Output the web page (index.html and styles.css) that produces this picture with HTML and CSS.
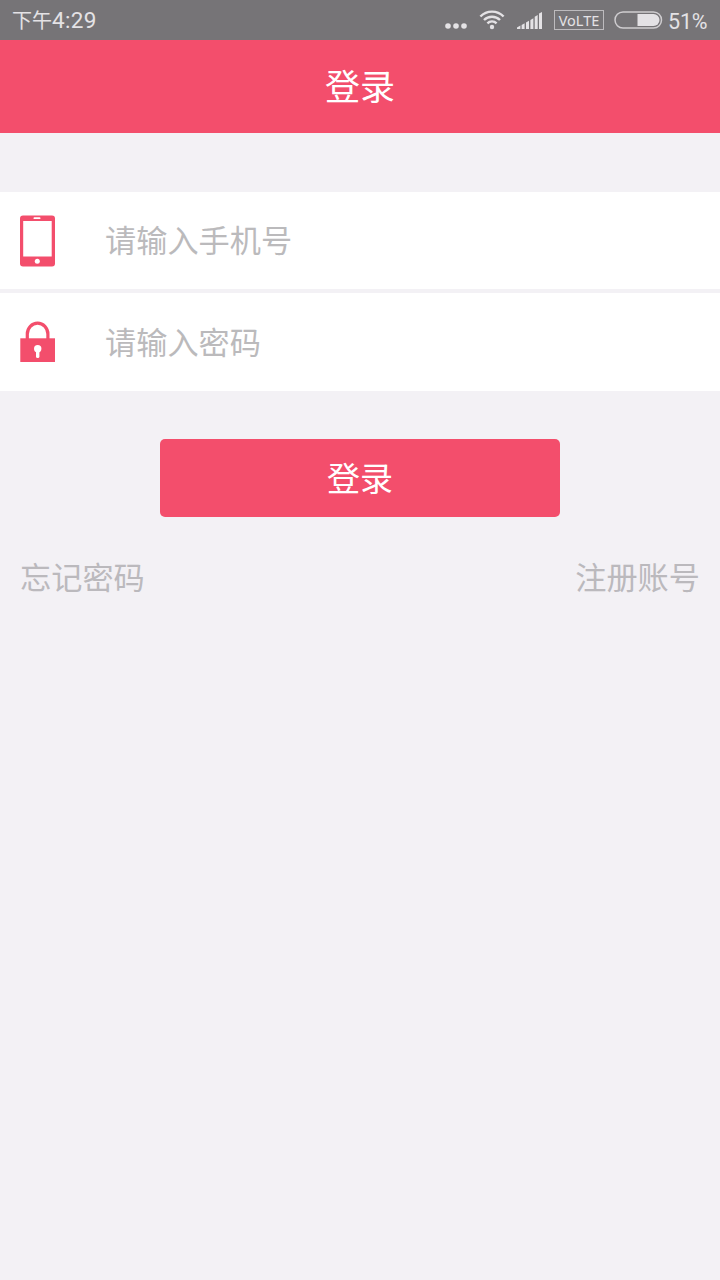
FILE: index.html
```
<!DOCTYPE html>
<html lang="zh-CN">
<head>
    <meta charset="UTF-8">
    <title>登录</title>
    <link rel="stylesheet" href="styles.css">
</head>
<body>
    <!-- Status bar -->
    <div class="status-bar">
        <div class="time"><span class="period">下午</span>4:29</div>
        <div class="status-icons">
            <svg class="dots" width="22" height="6" viewBox="0 0 22 6">
                <circle cx="3" cy="3" r="2.8"/>
                <circle cx="11" cy="3" r="2.8"/>
                <circle cx="19" cy="3" r="2.8"/>
            </svg>
            <svg class="wifi" width="26" height="20" viewBox="0 0 26 20">
                <path d="M1.4 6.5a16.2 16.2 0 0 1 23.2 0M5 10a11.3 11.3 0 0 1 16 0M8.4 13.3a6.5 6.5 0 0 1 9.2 0"/>
                <circle cx="13" cy="17" r="2.2"/>
            </svg>
            <svg class="signal" width="25" height="18" viewBox="0 0 25 18">
                <path d="M0 18v-1.6l3.4-1.8V18zM4.6 18v-4l3-1.7V18zM9 18v-6.5l3-1.7V18zM13.4 18V8.9l3-1.7V18zM17.7 18V5.7l3-1.7V18zM22 18V2.6L25 1v17z"/>
            </svg>
            <span class="volte">VoLTE</span>
            <svg class="battery" width="49" height="18" viewBox="0 0 49 18">
                <rect class="case" x="1" y="1" width="46.5" height="16" rx="8"/>
                <path d="M23.5 3H39.5a6 6 0 0 1 0 12H23.5z"/>
            </svg>
            <span class="percent">51%</span>
        </div>
    </div>
    <h1>登录</h1>
    <form>
        <div class="input-group">
            <svg class="icon" width="36" height="52" viewBox="0 0 36 52">
                <rect class="fill" x="0" y="0.5" width="35" height="51" rx="3"/>
                <rect class="hole" x="3.2" y="6" width="28.5" height="35.5"/>
                <rect class="hole" x="13.5" y="2.3" width="7" height="1.8" rx="0.9"/>
                <circle class="hole" cx="17.3" cy="46.3" r="2.5"/>
            </svg>
            <input type="text" placeholder="请输入手机号">
        </div>
        <div class="input-group">
            <svg class="icon" width="36" height="42" viewBox="0 0 36 42">
                <path class="shackle" d="M7.3 19V13a10.3 10.8 0 0 1 20.6 0v6"/>
                <rect class="fill" x="0.3" y="17.3" width="34.7" height="23.7"/>
                <circle class="hole" cx="17.7" cy="27.8" r="3.7"/>
                <rect class="hole" x="16" y="28" width="3.4" height="9" rx="1.5"/>
            </svg>
            <input type="password" placeholder="请输入密码">
        </div>
        <button type="button">登录</button>
    </form>
    <div class="links">
        <a>忘记密码</a>
        <a>注册账号</a>
    </div>
</body>
</html>
```
FILE: styles.css
```
body {
    background-color: #F3F1F5;
    font-family: Roboto, "Noto Sans CJK SC", sans-serif;
    margin: 0;
}
.status-bar {
    display: flex;
    justify-content: space-between;
    align-items: center;
    box-sizing: border-box;
    height: 40px;
    padding: 0 12px;
    background-color: #767477;
    color: #E4E2E5;
}
.time {
    font-size: 22.5px;
    line-height: 40px;
    letter-spacing: 0.3px;
}
.period {
    font-size: 20px;
    letter-spacing: 0;
}
.status-icons {
    display: flex;
    align-items: center;
}
.status-icons svg {
    flex-shrink: 0;
    fill: #E4E2E5;
}
.dots {
    margin-top: 12px;
    margin-right: 12px;
}
.wifi {
    margin-right: 12px;
}
.wifi path {
    fill: none;
    stroke: #E4E2E5;
    stroke-width: 2.4;
}
.signal {
    margin-right: 12px;
}
.volte {
    box-sizing: border-box;
    width: 50px;
    height: 20px;
    margin-right: 10px;
    border: 1.5px solid #BDBBBE;
    font-family: "Noto Sans", sans-serif;
    font-size: 14.5px;
    line-height: 18px;
    text-align: center;
}
.battery {
    margin-right: 5px;
}
.battery .case {
    fill: none;
    stroke: #CFCDD0;
    stroke-width: 1.5;
}
.percent {
    width: 40px;
    padding-top: 2px;
    font-size: 21.5px;
    letter-spacing: -0.2px;
}
h1 {
    box-sizing: border-box;
    height: 93px;
    margin: 0 0 59px;
    padding-top: 2px;
    background-color: #F34E6C;
    color: #FFFFFF;
    font-size: 35px;
    font-weight: normal;
    line-height: 93px;
    text-align: center;
}
form {
    display: flex;
    flex-direction: column;
    align-items: center;
}
.input-group {
    display: flex;
    align-items: center;
    box-sizing: border-box;
    width: 100%;
    height: 97px;
    margin-bottom: 4px;
    padding: 0 20px;
    background-color: #FFFFFF;
}
.input-group:nth-child(2) {
    height: 98px;
    margin-bottom: 48px;
}
.icon {
    margin-right: 49px;
}
.icon .fill {
    fill: #F34E6C;
}
.icon .hole {
    fill: #FFFFFF;
}
.icon .shackle {
    fill: none;
    stroke: #F34E6C;
    stroke-width: 3.2;
}
input {
    flex: 1;
    height: 60px;
    padding: 2px 0 0;
    border: none;
    background: none;
    font-family: inherit;
    font-size: 31.2px;
}
input::placeholder {
    color: #BBBABC;
}
button {
    width: 400px;
    height: 78px;
    padding: 0 0 3px;
    border: none;
    border-radius: 5px;
    background-color: #F34E6C;
    color: #FFFFFF;
    font-family: inherit;
    font-size: 33px;
}
.links {
    display: flex;
    justify-content: space-between;
    margin-top: 39px;
    padding: 0 20px;
    color: #BBB9BD;
    font-size: 31.2px;
    line-height: 46px;
}
```
